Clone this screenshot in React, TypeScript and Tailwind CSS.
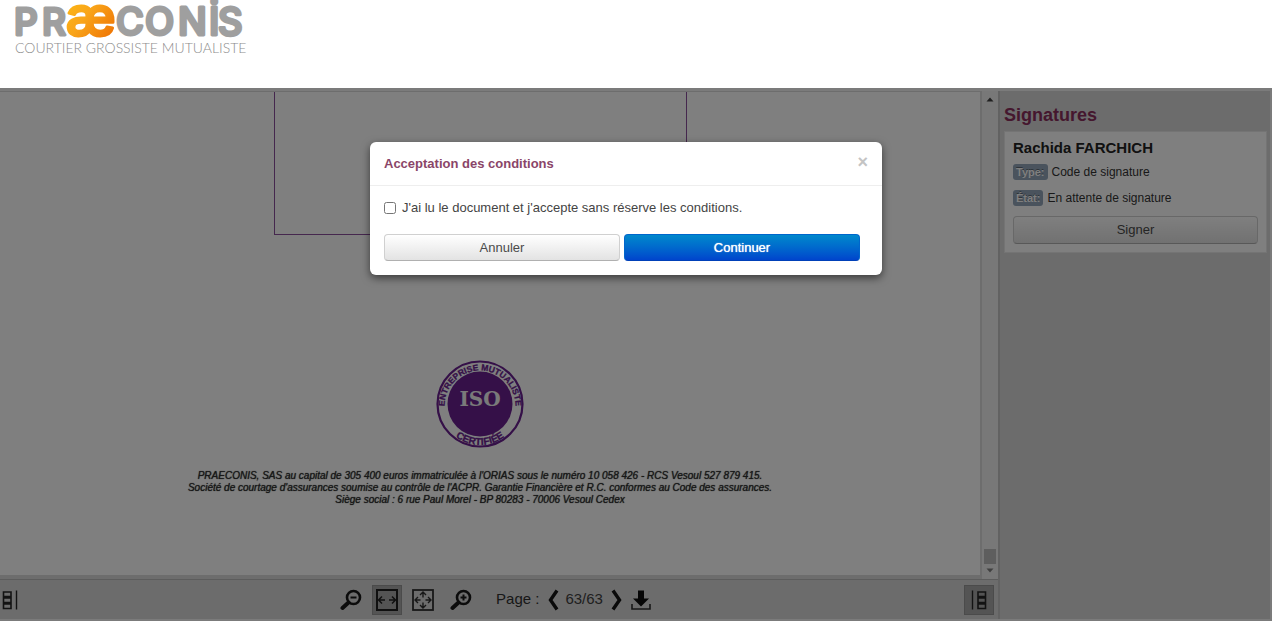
import { ReactNode, useState } from "react";

function Logo() {
  return (
    <svg width="240" height="56" viewBox="0 0 240 56" role="img" aria-label="Præconis, courtier grossiste mutualiste" className="block">
      <defs>
        <linearGradient id="warm" x1="0" y1="0" x2="1" y2="1">
          <stop offset="0.1" stopColor="#fdb913" />
          <stop offset="0.45" stopColor="#f9a51a" />
          <stop offset="0.9" stopColor="#ee7203" />
        </linearGradient>
      </defs>
      <g fontFamily="Inter, sans-serif" fill="#9f9f9f" stroke="#9f9f9f" strokeWidth="3" strokeLinejoin="round">
        <text y="35" fontSize="37" fontWeight="500" x="-1 27">PR</text>
        <text y="35" fontSize="38" fontWeight="500" x="101 130 163 194 203">CONİS</text>
        <text y="35.500" fontSize="54" fontWeight="500" x="51" fill="url(#warm)" stroke="url(#warm)">æ</text>
      </g>
      <text x="0" y="53" fontFamily="Lato, sans-serif" fontSize="14" fontWeight="300" fill="#8c8c8c">COURTIER GROSSISTE MUTUALISTE</text>
    </svg>
  );
}

function IsoSeal() {
  return (
    <svg width="90" height="88" viewBox="0 0 90 88" role="img" aria-label="ISO entreprise mutualiste certifiée" className="block">
      <defs>
        <path id="arcTop" d="M 9.5 46 A 35.500 35.500 0 1 1 80.500 46" />
        <path id="arcBottom" d="M 4 44 A 41 41 0 0 0 86 44" />
      </defs>
      <circle cx="45" cy="44" r="42.5" fill="none" stroke="#6a2090" strokeWidth="2.2" />
      <circle cx="45" cy="44" r="32.500" fill="#6a2090" />
      <g fontFamily="Liberation Sans, sans-serif" fontWeight="700" fill="#6a2090" stroke="#6a2090" strokeWidth="0.3" textAnchor="middle">
        <text fontSize="8.500"><textPath href="#arcTop" startOffset="50%">ENTREPRISE MUTUALISTE</textPath></text>
        <text fontSize="10"><textPath href="#arcBottom" startOffset="50%">CERTIFIÉE</textPath></text>
      </g>
      <text x="45" y="46" textAnchor="middle" fontFamily="DejaVu Serif, serif" fontWeight="700" fontSize="20" fill="#f4f4f4">ISO</text>
    </svg>
  );
}

function Magnifier({ plus }: { plus?: boolean }) {
  return (
    <svg width="22" height="22" viewBox="0 0 22 22" fill="none" stroke="#181818">
      <circle cx="13.5" cy="8.500" r="6.500" strokeWidth="2.6" />
      <path d="M8.500 13.500 L2.500 19" strokeWidth="4" strokeLinecap="round" />
      <path d={plus ? "M10.500 8.500h6M13.500 5.500v6" : "M10.500 8.500h6"} strokeWidth="2" />
    </svg>
  );
}

function FitWidth() {
  return (
    <svg width="22" height="22" viewBox="0 0 22 22" fill="none" stroke="#202020" strokeWidth="1.5">
      <rect x="1" y="1" width="20" height="20" strokeWidth="2" />
      <path d="M9 11H3M6 7.5L2.5 11L6 14.5M13 11h6M16 7.5l3.5 3.5l-3.5 3.5" />
    </svg>
  );
}

function FitPage() {
  return (
    <svg width="22" height="22" viewBox="0 0 22 22" fill="none" stroke="#303030" strokeWidth="1.4">
      <rect x="1" y="1" width="20" height="20" strokeWidth="1.8" />
      <path d="M8.5 11H3M6 8L3 11l3 3M13.5 11H19M16 8l3 3l-3 3M11 8.5V3M8 6l3-3l3 3M11 13.5V19M8 16l3 3l3-3" />
    </svg>
  );
}

function Thumbs({ flip }: { flip?: boolean }) {
  return (
    <svg width="16" height="20" viewBox="0 0 16 20" fill="none" stroke="#262626" className={flip ? "-scale-x-100" : ""}>
      <path d="M1.5 2h7.500v4.500h-7.500zM1.5 8h7.500v4.500h-7.500zM1.5 14h7.500v4.500h-7.500z" strokeWidth="1.6" />
      <path d="M14.5 0.5v19" strokeWidth="1.4" />
    </svg>
  );
}

function Chevron({ right }: { right?: boolean }) {
  return (
    <svg width="12" height="22" viewBox="0 0 12 22" fill="none" stroke="#151515" strokeWidth="3.4" className={right ? "-scale-x-100" : ""}>
      <path d="M10 1.5L3.5 11L10 20.5" />
    </svg>
  );
}

function Download() {
  return (
    <svg width="20" height="20" viewBox="0 0 20 20">
      <path d="M7 0.5h6v8h5L10 16.5L2 8.500H7z" fill="#0c0c0c" />
      <path d="M1 14v5h18v-5" fill="none" stroke="#303030" strokeWidth="1.6" />
    </svg>
  );
}

function Tag({ children }: { children: ReactNode }) {
  return (
    <span className="mr-1 inline-block rounded-[3px] bg-[#94a6ba] px-[3px] text-[11px] leading-4 font-bold text-white [text-shadow:0_-1px_0_rgba(0,0,0,0.4)]">
      {children}
    </span>
  );
}

export default function App() {
  const [accepted, setAccepted] = useState(false);
  const plainButton = "rounded-[4px] border border-[#d0d0d0] border-b-[#b0b0b0] bg-linear-to-b from-white to-[#e3e3e3] text-[13px] text-[#4a4a4a]";

  return (
    <div className="flex h-screen flex-col bg-white pr-1 pb-0.5 font-['Liberation_Sans',Arial,sans-serif] text-[13px] text-[#444]">
      <header className="h-[88px] shrink-0 pl-[15px]">
        <Logo />
      </header>

      <main className="relative flex min-h-0 flex-1 border-t-3 border-r-2 border-b-2 border-[#7b7b7b]">
        <section className="flex min-w-0 flex-1 flex-col bg-[#dadada]">
          <div className="flex min-h-0 flex-1">
            <div className="flex min-w-0 flex-1 flex-col pt-px pr-0.5 pb-1">
              <article className="flex flex-1 flex-col items-center overflow-hidden bg-white pr-5">
                <div className="h-[143px] w-[413px] shrink-0 border-x border-b border-[#8b4f9c]" />
                <div className="mt-[125px]">
                  <IsoSeal />
                </div>
                <p className="mt-[22px] text-center text-[10px] leading-3 whitespace-nowrap text-[#303030] italic [text-shadow:0_0_1px_#303030]">
                  PRAECONIS, SAS au capital de 305 400 euros immatriculée à l'ORIAS sous le numéro 10 058 426 - RCS Vesoul 527 879 415.
                  <br />
                  Société de courtage d'assurances soumise au contrôle de l'ACPR. Garantie Financière et R.C. conformes au Code des assurances.
                  <br />
                  Siège social : 6 rue Paul Morel - BP 80283 - 70006 Vesoul Cedex
                </p>
              </article>
            </div>
            <div className="flex w-4 flex-col items-center justify-between bg-[#f1f1f1] py-1.5">
              <svg width="8" height="5" viewBox="0 0 8 5"><path d="M0.500 4.500L4 0.500L7.500 4.500z" fill="#404040" /></svg>
              <div className="flex w-full flex-col items-center gap-1 px-0.5">
                <div className="h-[15px] w-full bg-[#bdbdbd]" />
                <svg width="8" height="5" viewBox="0 0 8 5"><path d="M0.500 0.500L4 4.500L7.500 0.500z" fill="#808080" /></svg>
              </div>
            </div>
          </div>
          <nav className="flex h-10 shrink-0 items-center justify-between border-t border-[#b8b8b8] bg-[#d8d8d8] pr-[5px] pl-0.5">
            <button aria-label="Miniatures"><Thumbs /></button>
            <div className="flex items-center pl-2">
              <button aria-label="Zoom arrière" className="mr-[11px]"><Magnifier /></button>
              <button aria-label="Ajuster à la largeur" className="mr-[11px] flex size-7 items-center justify-center bg-[#a8a8a8] ring ring-[#969696]"><FitWidth /></button>
              <button aria-label="Page entière" className="mr-4"><FitPage /></button>
              <button aria-label="Zoom avant" className="mr-6"><Magnifier plus /></button>
              <span className="mr-2 text-[15px] text-[#303030]">Page :</span>
              <button aria-label="Page précédente" className="mr-1.5"><Chevron /></button>
              <span className="mr-2 text-[15px] text-[#404040]">63/63</span>
              <button aria-label="Page suivante" className="mr-2"><Chevron right /></button>
              <button aria-label="Télécharger"><Download /></button>
            </div>
            <button aria-label="Panneau des signatures" className="flex size-7 items-center justify-center bg-[#a8a8a8] ring ring-[#969696]"><Thumbs flip /></button>
          </nav>
        </section>

        <aside className="w-[272px] shrink-0 border-l-2 border-[#c4c4c4] bg-[#d8d8d8] pt-3 pr-[3px] pl-1">
          <h2 className="text-lg leading-6 font-bold text-[#8a2f5c]">Signatures</h2>
          <div className="mt-1 border border-[#e8e8e8] bg-white px-2 pt-1.5 pb-2">
            <h3 className="text-[15px] leading-5 font-bold text-[#222]">Rachida FARCHICH</h3>
            <p className="mt-1 text-xs leading-5 text-[#333]"><Tag>Type:</Tag>Code de signature</p>
            <p className="mt-1.5 text-xs leading-5 text-[#333]"><Tag>État:</Tag>En attente de signature</p>
            <button className={`mt-2 h-7 w-full ${plainButton}`}>Signer</button>
          </div>
        </aside>

        <div className="absolute inset-0 flex items-start justify-center bg-black/50 pt-[51px] pr-[18px]">
          <div role="dialog" aria-labelledby="dialog-title" className="w-lg rounded-md bg-white shadow-[0_3px_9px_rgba(0,0,0,0.55)]">
            <div className="flex h-11 items-center justify-between border-b border-[#eee] px-3.5">
              <h1 id="dialog-title" className="text-[13px] font-bold text-[#8a4568]">Acceptation des conditions</h1>
              <button aria-label="Fermer" className="pb-1 text-lg leading-4 font-bold text-[#c4c4c4]">×</button>
            </div>
            <div className="pt-3 pr-[22px] pb-3.5 pl-3.5">
              <label className="flex items-center gap-1.5 leading-5">
                <input
                  type="checkbox"
                  checked={accepted}
                  onChange={(event) => setAccepted(event.target.checked)}
                  className="size-3"
                />
                J'ai lu le document et j'accepte sans réserve les conditions.
              </label>
              <div className="mt-4 flex gap-1">
                <button className={`h-[27px] flex-1 ${plainButton}`}>Annuler</button>
                <button className="h-[27px] flex-1 rounded-[4px] border border-[#0066cc] border-b-[#0040b8] bg-linear-to-b from-[#0088cc] to-[#0044cc] text-[13px] text-white [text-shadow:0_0_1px_#fff]">Continuer</button>
              </div>
            </div>
          </div>
        </div>
      </main>
    </div>
  );
}
